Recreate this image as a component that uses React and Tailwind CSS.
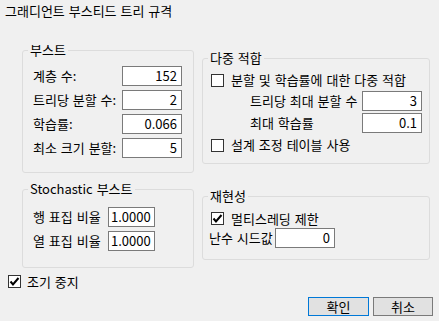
import React from "react";

const Check = ({ checked }) => (
  <span className="w-[13px] h-[13px] border border-[#333333] bg-white flex items-center justify-center shrink-0">
    {checked && (
      <svg width="11" height="11" viewBox="0 0 11 11">
        <path d="M1.5 5.5 L4 8.5 L9.5 2" fill="none" stroke="#000" strokeWidth="2" />
      </svg>
    )}
  </span>
);

const Field = ({ value, w = "w-[60px]", left }) => (
  <div
    className={`${w} h-[20px] border border-[#7a7a7a] bg-white flex items-center shrink-0 ${
      left ? "justify-start pl-[2px]" : "justify-end pr-[4px]"
    }`}
  >
    {value}
  </div>
);

// group box: legend sits on the top border
const Group = ({ title, className, inner, children }) => (
  <fieldset className={`border border-[#dcdcdc] rounded-[3px] ${className}`}>
    <legend className="ml-[5px] px-[2px] leading-[14px]">{title}</legend>
    <div className={inner}>{children}</div>
  </fieldset>
);

const App = () => {
  const boost = [
    ["계층 수:", "152"],
    ["트리당 분할 수:", "2"],
    ["학습률:", "0.066"],
    ["최소 크기 분할:", "5"],
  ];
  return (
    <div className="w-[439px] h-[321px] bg-[#f0f0f0] text-black text-[13px] leading-[14px] [word-spacing:1px] font-['Noto_Sans_CJK_KR',sans-serif] overflow-hidden">
      {/* title */}
      <div className="h-[20px] pl-[5px] pt-[4px]">그래디언트 부스티드 트리 규격</div>

      <div className="flex pl-[22px] gap-[8px] h-[248px]">
        {/* left column */}
        <div className="w-[172px] mt-[23px] flex flex-col">
          <Group title="부스트" className="h-[130px]" inner="pt-[9px] pl-[10px] pr-[11px] flex flex-col gap-[4px]">
            {boost.map((row, i) => (
              <div key={i} className="flex items-center justify-between">
                <span>{row[0]}</span>
                <Field value={row[1]} />
              </div>
            ))}
          </Group>
          <Group title="Stochastic 부스트" className="mt-[9px] h-[86px]" inner="pt-[11px] pl-[10px] flex flex-col gap-[4px]">
            <div className="flex items-center">
              <span className="w-[75px]">행 표집 비율</span>
              <Field value="1.0000" w="w-[47px]" left />
            </div>
            <div className="flex items-center">
              <span className="w-[75px]">열 표집 비율</span>
              <Field value="1.0000" w="w-[47px]" left />
            </div>
          </Group>
        </div>

        {/* right column */}
        <div className="w-[228px] mt-[31px] flex flex-col">
          <Group title="다중 적합" className="h-[113px]" inner="pt-[5px] pl-[8px] pr-[7px]">
            <div className="h-[20px] flex items-center gap-[7px]">
              <Check />
              <span>분할 및 학습률에 대한 다중 적합</span>
            </div>
            <div className="mt-[1px] flex items-center justify-between pl-[39px]">
              <span>트리당 최대 분할 수</span>
              <Field value="3" />
            </div>
            <div className="mt-[2px] flex items-center justify-between pl-[39px]">
              <span>최대 학습률</span>
              <Field value="0.1" />
            </div>
            <div className="mt-[2px] h-[20px] flex items-center gap-[7px]">
              <Check />
              <span>설계 조정 테이블 사용</span>
            </div>
          </Group>
          <Group title="재현성" className="mt-[25px] h-[71px]" inner="pt-[6px] pl-[6px]">
            <div className="h-[19px] flex items-center gap-[7px] ml-[2px]">
              <Check checked />
              <span>멀티스레딩 제한</span>
            </div>
            <div className="flex items-center">
              <span className="w-[66px]">난수 시드값</span>
              <Field value="0" />
            </div>
          </Group>
        </div>
      </div>

      {/* early stop */}
      <div className="mt-[7px] pl-[8px] h-[13px] flex items-center gap-[6px]">
        <Check checked />
        <span>조기 중지</span>
      </div>

      {/* buttons */}
      <div className="mt-[9px] pr-[6px] flex justify-end gap-[4px]">
        <button className="w-[61px] h-[19px] border border-[#0078d7] bg-[#e1e1e1] flex items-center justify-center">
          확인
        </button>
        <button className="w-[60px] h-[19px] border border-[#7a7a7a] bg-[#e1e1e1] flex items-center justify-center">
          취소
        </button>
      </div>
    </div>
  );
};

export default App;
